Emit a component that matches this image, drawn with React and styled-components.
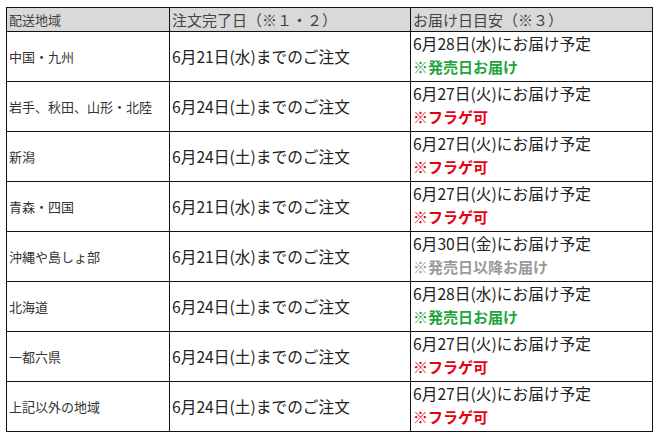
import React from "react"
import styled, { createGlobalStyle } from "styled-components"

const rows = [
  { area: "中国・九州", order: "6月21日(水)までのご注文", date: "6月28日(水)にお届け予定", note: "※発売日お届け", tone: "green" },
  { area: "岩手、秋田、山形・北陸", order: "6月24日(土)までのご注文", date: "6月27日(火)にお届け予定", note: "※フラゲ可", tone: "red" },
  { area: "新潟", order: "6月24日(土)までのご注文", date: "6月27日(火)にお届け予定", note: "※フラゲ可", tone: "red" },
  { area: "青森・四国", order: "6月21日(水)までのご注文", date: "6月27日(火)にお届け予定", note: "※フラゲ可", tone: "red" },
  { area: "沖縄や島しょ部", order: "6月21日(水)までのご注文", date: "6月30日(金)にお届け予定", note: "※発売日以降お届け", tone: "gray" },
  { area: "北海道", order: "6月24日(土)までのご注文", date: "6月28日(水)にお届け予定", note: "※発売日お届け", tone: "green" },
  { area: "一都六県", order: "6月24日(土)までのご注文", date: "6月27日(火)にお届け予定", note: "※フラゲ可", tone: "red" },
  { area: "上記以外の地域", order: "6月24日(土)までのご注文", date: "6月27日(火)にお届け予定", note: "※フラゲ可", tone: "red" }
]

const tones = {
  green: "#22a63c",
  red: "#e60012",
  gray: "#9a9a9a"
}

const GlobalStyle = createGlobalStyle`
  body {
    margin: 0;
    background: #fff;
    font-family: "Noto Sans CJK JP", "Noto Sans", sans-serif;
    color: #222;
  }
`

const Table = styled.table`
  margin: 7px 0 0 6px;
  width: 646px;
  border-collapse: collapse;
  table-layout: fixed;
`

const Head = styled.th`
  height: 23px;
  padding: 0 2px;
  background: #d9d9d9;
  border: 1px solid #111;
  color: #444;
  font-weight: 400;
  font-size: ${(p) => (p.small ? "13px" : "15px")};
  line-height: 21px;
  text-align: left;
  vertical-align: middle;
`

const Cell = styled.td`
  height: 49px;
  padding: 0 2px;
  border: 1px solid #111;
  font-size: ${(p) => (p.small ? "13px" : "15.7px")};
  line-height: 23px;
  color: ${(p) => (p.small ? "#333" : "#222")};
  vertical-align: ${(p) => (p.top ? "top" : "middle")};
`

const Note = styled.div`
  font-size: 15px;
  font-weight: 700;
  color: ${(p) => tones[p.tone]};
`

export default function App() {
  return (
    <>
      <GlobalStyle />
      <Table>
        <colgroup>
          <col style={{ width: 163 }} />
          <col style={{ width: 241 }} />
          <col style={{ width: 242 }} />
        </colgroup>
        <thead>
          <tr>
            <Head small>配送地域</Head>
            <Head>注文完了日（※１・２）</Head>
            <Head>お届け日目安（※３）</Head>
          </tr>
        </thead>
        <tbody>
          {rows.map((r) => (
            <tr key={r.area}>
              <Cell small>{r.area}</Cell>
              <Cell>{r.order}</Cell>
              <Cell top>
                <div>{r.date}</div>
                <Note tone={r.tone}>{r.note}</Note>
              </Cell>
            </tr>
          ))}
        </tbody>
      </Table>
    </>
  )
}
